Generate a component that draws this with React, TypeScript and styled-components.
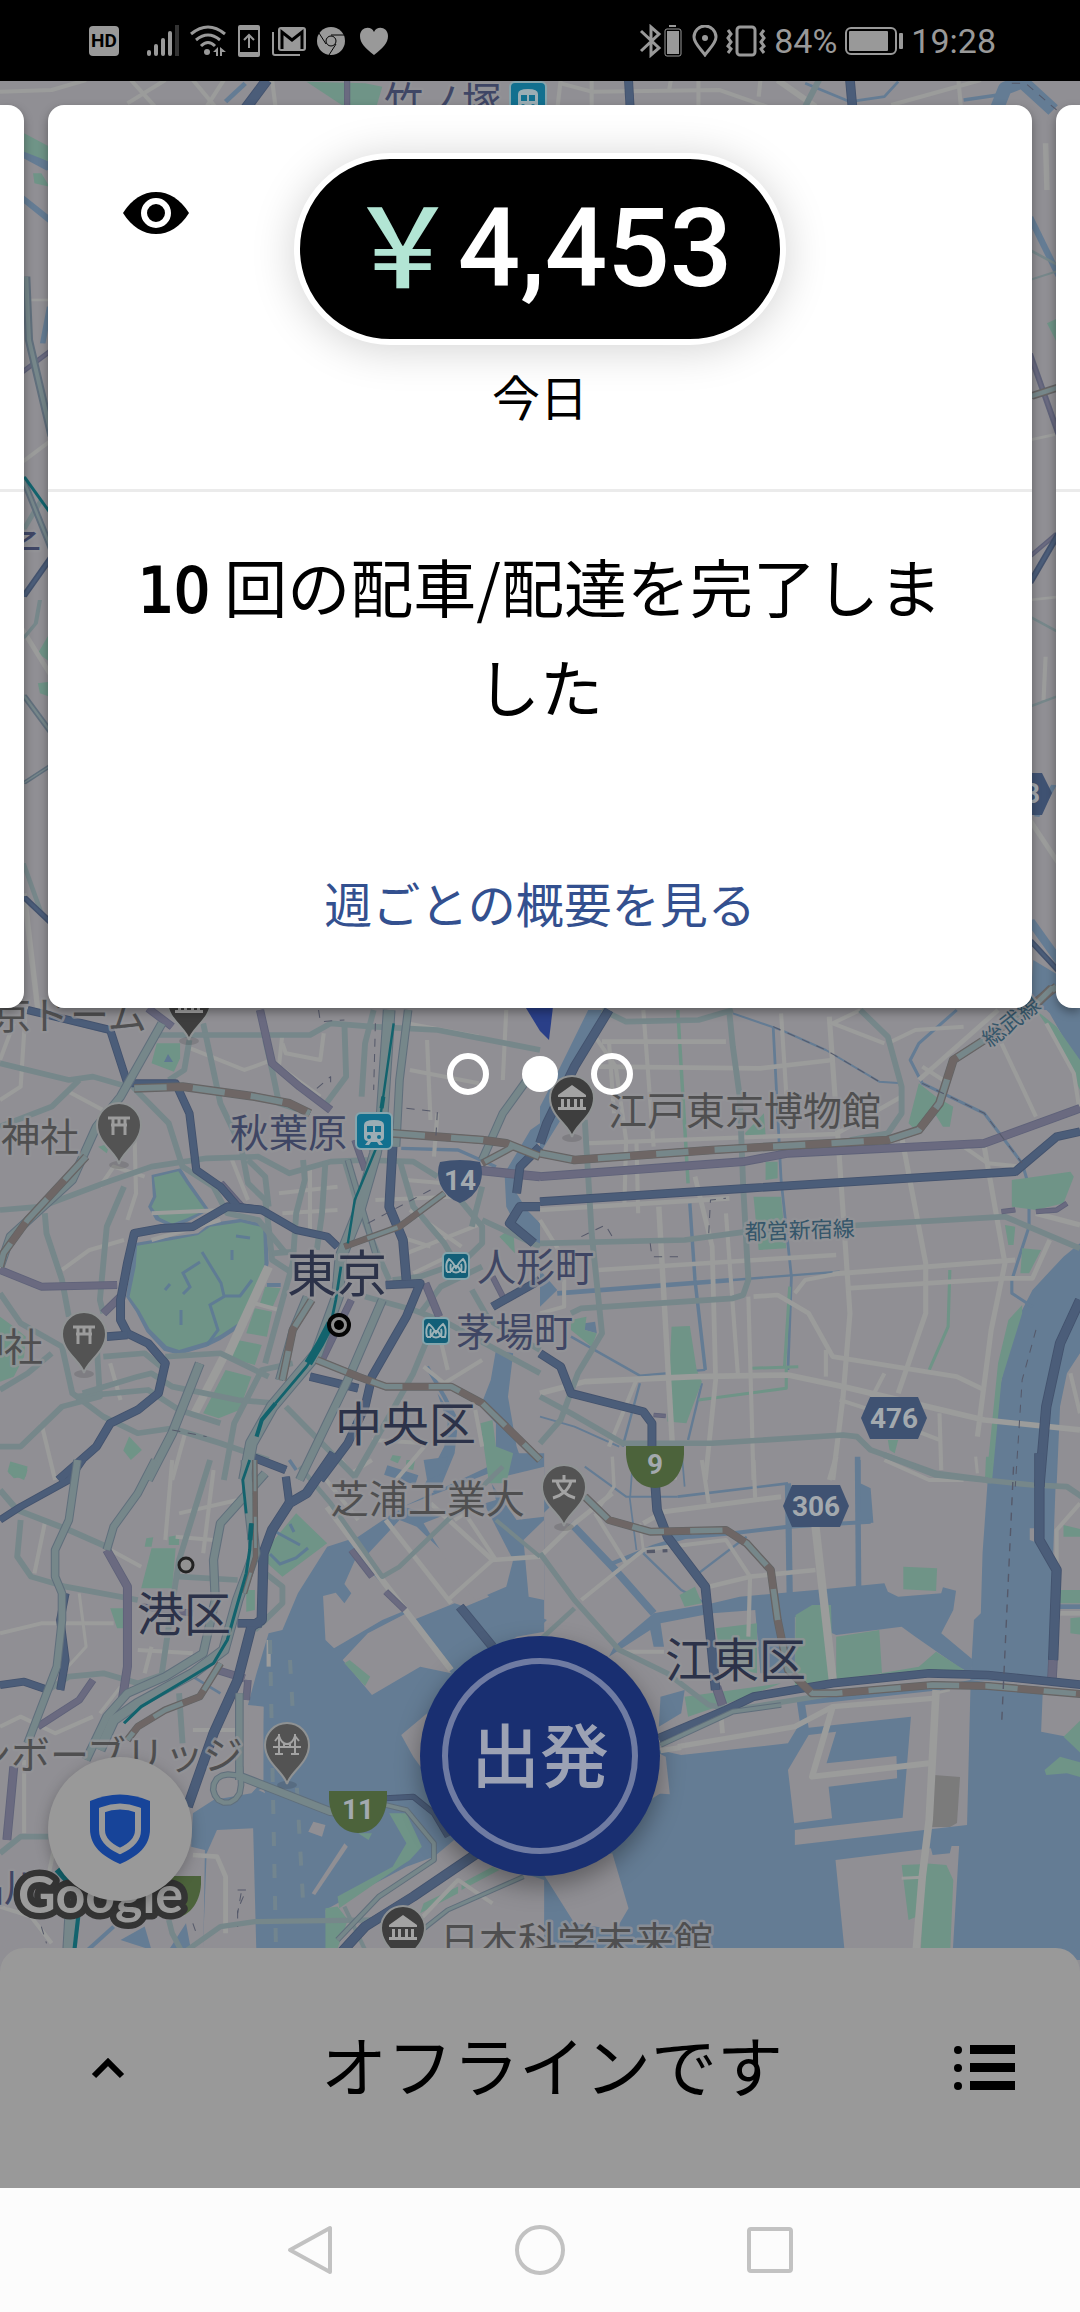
import React from 'react';
import styled, { createGlobalStyle } from 'styled-components';

const jp = `'Noto Sans CJK JP', 'Noto Sans', sans-serif`;

const GlobalStyle = createGlobalStyle`
  *, *::before, *::after { box-sizing: border-box; }
  body { margin: 0; background: #000; font-family: ${jp}; color: #000; }
  button { margin: 0; padding: 0; border: 0; background: none; font: inherit; color: inherit; cursor: pointer; }
  svg { display: block; }
`;

/* ---------- map data ---------- */

type Line = [string, number?];
interface Tile {
  at: string;
  water?: string[];
  canals?: Line[];
  land?: string[];
  parks?: string[];
  greens?: Line[];
  minor?: Line[];
  street?: Line[];
  purple?: Line[];
  blue?: Line[];
  trunk?: Line[];
  rail?: Line[];
  teal?: Line[];
  dashes?: Line[];
}

const quad = (x: number, y: number) => `translate(${x} ${y}) scale(0.3444 0.3333)`;
const wide = (y: number) => `translate(0 ${y}) scale(0.6888 0.3333)`;

const tiles: Tile[] = [
  {
    at: quad(0, 0),
    parks: ['890,245 1060,250 1110,260 1090,330 1000,320'],
    canals: [['655,305 712,250', 14]],
    minor: [['0,275 150,270 250,240'], ['370,310 480,240'], ['380,240 450,320'], ['560,240 625,320'], ['600,320 650,240'], ['790,240 800,320']],
    purple: [['1008,240 1008,330', 16]],
    blue: [['710,330 775,240', 30]],
  },
  {
    at: quad(540, 0),
    canals: [['770,250 900,305 1000,290 1040,245', 8], ['1230,300 1330,285', 10], ['1325,330 1350,265 1400,245 1490,330', 40]],
    minor: [['60,240 50,330'], ['60,250 150,275 520,270 660,320'], ['150,240 150,330'], ['380,240 375,270'], ['460,240 460,330'], ['640,240 635,290'], ['690,240 800,320', 18], ['1020,315 1280,240'], ['1215,240 1222,320']],
    street: [['810,240 765,330', 18]],
    blue: [['257,240 262,330', 24], ['900,240 908,330', 26]],
    dashes: [['1370,250 1410,250 1500,330', 3]],
  },
  {
    at: wide(90),
    parks: ['35,130 72,170 72,215 35,185', '48,250 60,250 72,290 50,280', '1520,700 1540,680 1540,780'],
    canals: [['30,185 75,235', 20], ['30,320 75,395', 12], ['1495,380 1540,570', 10], ['62,760 72,650', 8]],
    minor: [['30,630 75,630', 8], ['1518,160 1520,300', 8], ['30,1120 75,1050', 8], ['1495,1050 1540,1030', 8]],
    street: [['1495,480 1540,530', 6], ['1495,570 1540,540', 5]],
    purple: [['30,850 75,780', 8], ['1495,790 1538,1040', 7], ['1495,1400 1535,1330', 7]],
    trunk: [['38,560 42,750 75,1040', 9], ['34,1170 75,1380', 7]],
    rail: [['1495,920 1540,890', 18]],
    teal: [['35,1160 75,1275', 5]],
  },
  {
    at: wide(500),
    water: ['1500,1380 1540,1430 1540,1530 1495,1530'],
    parks: ['72,400 55,460 72,485', '55,550 72,545 72,590 58,580'],
    canals: [['1505,950 1530,855', 8], ['1495,1260 1540,1390', 14]],
    minor: [['30,380 75,530', 8], ['35,1180 55,1530', 8], ['1495,300 1540,290', 8], ['1495,960 1540,1100', 8], ['1518,470 1515,600', 6]],
    street: [['34,415 52,370 58,300', 6], ['34,90 60,0', 8], ['1495,350 1540,400', 6], ['1495,620 1540,585', 6], ['34,1090 60,1240', 7]],
    blue: [['34,290 75,170', 8], ['34,1190 75,1270', 9], ['1495,250 1540,90', 8], ['1495,1320 1540,1420', 8]],
    trunk: [['34,585 75,700', 7], ['34,850 75,795', 6]],
    rail: [['1495,1530 1530,1460', 16]],
  },
  {
    at: quad(0, 980),
    water: [
      '1568,430 1540,450 1500,520 1465,580 1470,680 1500,740 1568,800 1568,730 1530,690 1500,640 1510,560 1568,480',
      '1440,1110 1490,1120 1475,1250 1500,1400 1540,1520 1440,1520 1440,1330 1395,1280 1425,1200',
      '1270,1240 1330,1330 1320,1420 1280,1520 1230,1520 1290,1400 1300,1330',
      '366,950 380,860 388,790 500,770 575,760 610,730 700,716 775,735 780,850 768,910 735,990 700,1040 640,1080 600,1100 520,1124 476,1112 425,1055 395,995',
      '440,585 525,565 550,605 608,690 545,725 500,742 452,720 430,680 444,650',
    ],
    canals: [['1165,505 1330,510 1440,560', 10], ['1240,1160 1290,1250 1330,1330', 12], ['70,90 320,155', 14], ['1120,1470 1210,1500', 30], ['775,915 815,915', 12]],
    parks: [
      '398,797 500,780 575,765 590,800 575,765 610,740 700,727 764,742 768,850 756,910 724,985 694,1028 640,1065 600,1085 520,1110 484,1098 434,1046 404,990 376,950 386,900 394,860',
      '447,592 518,574 542,612 596,690 540,716 500,731 464,713 440,680 454,650',
      '455,190 523,190 523,235 505,275 440,250',
      '770,920 815,925 790,985 755,970', '740,985 790,995 775,1070 715,1060',
      '690,1080 760,1095 740,1155 655,1130', '655,1170 730,1190 695,1290 635,1315 590,1300',
      '0,1010 40,1040 75,1070 70,1130 40,1190 0,1205',
      '375,1370 412,1410 380,1440 358,1412', '30,1445 80,1460 75,1490 40,1495 22,1475',
      '1450,770 1490,740 1495,820', '1395,1330 1430,1320 1440,1400 1490,1420 1470,1510 1420,1510',
      '1180,1440 1205,1440 1200,1470 1178,1465', '1140,1425 1165,1430 1155,1450 1133,1440', '285,500 320,490 310,520',
    ],
    minor: [
      ['0,360 60,320 75,80'], ['820,190 830,220 930,240 940,160'], ['540,200 710,270 790,240'], ['190,330 390,440 395,640 370,720'],
      ['180,870 260,810 360,780'], ['1180,130 1390,170'], ['1090,660 1310,650'], ['1180,820 1400,730'], ['1180,600 1290,610'],
      ['780,860 660,1130', 26], ['650,1130 560,1310', 24], ['740,970 810,990'], ['320,1150 350,1260'], ['540,1350 500,1500'],
      ['440,700 650,690'], ['1230,1160 1290,1210 1400,1140'], ['1160,770 1250,800'], ['1080,1380 1240,1390 1150,1500'],
      ['1470,90 1460,300'], ['0,240 40,130'], ['290,620 330,560 420,590'], ['640,720 440,780'], ['820,160 810,260 930,350'],
      ['900,560 900,760'], ['1240,180 1250,420'], ['1190,270 1390,310'], ['1190,690 1340,800'], ['1270,1040 1300,1170'],
      ['1200,880 1320,820'], ['820,700 980,690'], ['810,640 980,620'], ['120,1330 160,1500'], ['1380,1290 1400,1400'], ['670,530 720,660'], ['1270,400 1260,530'],
    ],
    street: [
      ['0,250 200,300 270,290 370,320'], ['0,440 150,380 230,300'],
      ['0,690 120,680 300,610 440,560 600,535 750,530 840,580 960,545 1060,540 1200,545 1270,590'],
      ['590,130 640,370 700,500 720,610 770,660 780,740 790,840 850,880'],
      ['385,320 490,430 530,560 620,620 660,700 750,720 830,820'],
      ['360,620 310,740 290,960 300,1000'], ['130,700 135,760 180,900 200,1010'],
      ['440,165 600,165 900,165 960,130 1080,140 1270,150 1568,210'], ['770,180 790,270 810,370 900,400'],
      ['1000,130 1005,290 940,380'], ['1085,90 1060,190 1050,350'], ['550,180 535,270 490,300'],
      ['880,540 885,600 860,700 850,850 770,1150'], ['945,545 935,700 920,810'], ['720,540 770,590 780,680'],
      ['1000,540 1040,680 1100,830 1130,900'], ['1160,540 1200,680 1290,790 1330,860'], ['1320,640 1400,740 1400,790 1340,850'],
      ['1370,740 1400,620'], ['1400,720 1568,800'], ['0,1230 80,1180 150,1120'],
      ['0,940 60,1030 180,1100 210,1240 300,1310 400,1360 500,1345 640,1390 780,1440'], ['220,1250 430,1230 520,1290 640,1330'],
      ['0,1400 60,1400 180,1280 290,1250 280,1080'], ['240,1240 400,1190 440,1180 500,1220 690,1260 800,1270'],
      ['300,1130 420,1120 480,1170'], ['650,1500 680,1330 760,1170 850,1150'], ['480,1130 640,1120 780,1190'],
      ['1240,1080 1200,1180 1080,1400 1030,1490 830,1280'], ['1060,950 1200,990 1300,1030 1568,1180'],
      ['1220,1000 1280,920 1400,860'], ['1140,900 1220,890 1330,850'], ['1370,930 1420,1020 1568,1110'], ['790,820 860,815'],
    ],
    purple: [['0,870 120,920 340,915'], ['640,610 700,680'], ['755,90 790,250 870,320 960,390'], ['300,1000 350,950'], ['1235,910 1275,1010'], ['1380,570 1568,590', 26], ['430,85 500,140'], ['1020,960 930,1150', 20], ['1430,890 1470,970', 16], ['1030,480 1060,570', 18]],
    blue: [
      ['80,90 320,150 370,310 510,310 550,400 570,570 640,620 690,680 760,690 860,750 950,770 980,800', 22],
      ['760,690 660,680 560,740 470,745 390,760 370,850 350,960 350,1020 370,1060 430,1090 480,1150 460,1240 400,1290 320,1330 280,1400 170,1500', 24],
      ['310,1070 370,1065'], ['1140,500 1130,680 1170,780 1180,900', 26],
      ['1120,915 1220,910 1180,1010 1080,1190 1060,1280 1010,1390 930,1500', 24], ['900,1190 1040,1225'], ['730,1430 830,1470'],
      ['1568,680 1510,680 1480,730 1550,790', 26], ['1430,980 1568,900', 24], ['1500,640 1510,560 1568,500', 24],
    ],
    trunk: [
      ['470,130 350,350 280,440 210,600 30,770 0,860', 24], ['580,1150 500,1360 430,1500', 26],
      ['1130,90 1110,400 1090,520 1040,700 990,830 980,950 920,1120 790,1280 730,1390 710,1500', 34],
      ['1185,90 1160,300 1150,500', 22], ['1110,960 1010,1200 870,1500', 24], ['1400,540 1460,400 1530,300', 22], ['890,950 850,1050 810,1200', 20], ['1010,540 1090,820', 16],
    ],
    rail: [
      ['390,325 530,320 740,350 840,370 900,400'], ['1140,460 1400,480 1470,490 1568,530'], ['1290,640 1160,740 1000,800', 18],
      ['905,960 850,1050 820,1200', 22], ['920,1140 1040,1190 1120,1220 1310,1220 1400,1270 1568,1440', 22],
      ['250,530 80,720 10,820 0,860', 22], ['1490,500 1400,550', 20],
    ],
    teal: [['1143,130 1110,370 1090,510 1030,660 1010,790', 7], ['1113,350 1108,385', 12], ['990,860 975,960 965,1010 930,1100 890,1160 800,1270', 8], ['960,1030 930,1090 895,1150', 24], ['800,1270 760,1320 745,1370', 12]],
    dashes: [['1180,385 1270,395 1265,480', 3], ['500,1350 600,1370', 3], ['920,325 960,290 960,310', 3], ['1250,630 1050,740', 3], ['925,90 930,125 1000,120', 3], ['1090,130 1085,330', 3]],
  },
  {
    at: quad(540, 980),
    water: [
      '1568,790 1520,830 1430,930 1370,1050 1330,1250 1310,1520 1500,1520 1510,1280 1530,1180 1568,1120',
      '1430,0 1568,0 1568,260 1480,100 1430,50', '140,90 200,90 110,250 60,420 0,520 0,380 40,300', '0,870 50,930 0,980',
      '130,1030 160,1025 165,1060 130,1050',
    ],
    canals: [
      ['50,940 560,900', 14], ['560,900 870,875', 7], ['677,140 700,600 730,890 720,1170', 8], ['435,670 450,900 480,1170', 10],
      ['480,1170 290,1187 90,1070', 7], ['290,1210 240,1400', 7], ['470,1210 430,1380', 7], ['560,100 700,150 830,210 985,305 1050,310', 6],
      ['1210,90 1100,190 1075,240 1110,310 1290,400 1400,550 1420,620 1420,740 1370,900 1370,940 1430,980', 9],
      ['925,1440 925,1520', 12], ['0,1310 100,1340 230,1400', 5], ['410,1400 420,1520', 5],
    ],
    parks: [
      '1100,310 1150,350 1200,380 1190,440 1170,440 1140,390 1090,450 1070,430', '595,460 650,400 655,465 600,470',
      '655,545 690,545 690,595 655,600', '620,650 700,650 715,805 635,810', '1370,600 1540,575 1550,590 1520,670 1440,690 1370,680',
      '1350,735 1380,740 1375,795 1360,795', '1400,805 1455,810 1420,880 1395,880', '90,1020 135,1010 130,1050 165,1060 150,1100 90,1050',
      '382,1040 435,1038 455,1170 470,1205 425,1330 370,1325', '1440,90 1500,140 1568,240 1568,330 1500,180',
      '1400,975 1360,1020 1330,1150 1295,1510 1312,1510 1340,1200 1400,1000', '1010,1380 1040,1380 1030,1420 1015,1410',
    ],
    greens: [['400,90 430,610', 10], ['1190,870 1185,1040 1130,1170', 9], ['725,920 710,1160', 9], ['615,1165 750,1160', 9], ['460,1260 715,1225 715,1160', 9]],
    minor: [
      ['160,170 220,260 250,480 245,680'], ['200,180 215,400'], ['300,90 330,500'], ['280,480 285,700'], ['345,680 390,1500', 16], ['450,590 500,800 510,1200 480,1500', 14],
      ['540,700 575,1190'], ['840,110 865,470 900,1000 880,1250 850,1500', 15], ['1050,470 1120,850 1120,1000 1040,1240', 15],
      ['1290,500 1350,850 1310,1050 1270,1370', 15], ['180,185 540,185', 14], ['170,260 640,265 850,240', 14], ['130,490 860,462 1050,350', 13], ['0,690 550,655', 14],
      ['170,870 860,825', 14], ['850,882 1380,840', 15], ['890,925 1350,895 1430,895 1480,780', 14],
      ['0,1240 130,1205 450,1190 720,1185 880,1220 1290,1320 1568,1350', 17], ['870,1260 960,1290'], ['1160,1300 1165,1470'],
      ['620,950 690,945 780,1000 850,1130 1210,1190 1290,1230', 14], ['740,940 770,900 870,880'], ['830,1110 830,1190'],
      ['930,90 850,130 1000,190'], ['1010,190 1090,150 1230,140'], ['1330,90 1100,300', 14], ['1110,260 1170,300'], ['1340,190 1440,410'], ['1230,500 1300,550 1400,560'],
      ['1440,700 1568,735', 16], ['200,1400 280,1200'], ['605,950 620,1500'], ['700,100 720,420'], ['1000,1180 960,1260'], ['1060,1340 1160,1380'], ['1540,1180 1568,1300'], ['0,720 60,820'], ['0,1000 70,980 70,870'],
      ['1470,130 1550,280 1568,400'],
    ],
    street: [
      ['180,90 250,125 460,120 560,90'], ['550,100 560,200 580,350 590,620 605,900 590,945 560,955 120,985 90,1000'],
      ['930,90 1010,170 1050,320 1050,400 1010,460 900,480'], ['130,420 150,760 180,1060 110,1180 60,1320 0,1390'],
      ['0,790 420,780 600,755 1350,710 1568,805'], ['0,1250 90,1300 240,1390 500,1390 880,1365 920,1370 960,1410 1150,1480 1300,1500'],
    ],
    purple: [['0,590 590,545 720,520 1290,490 1568,385', 24], ['1340,695 1380,690', 14], ['1440,695 1500,690 1530,670', 14], ['330,1305 365,1308', 12]],
    blue: [['200,90 100,260 20,430 0,490', 26], ['0,665 600,625 1380,575 1500,470 1568,455', 24], ['0,1120 60,1160 90,1240 300,1295 325,1330 325,1400', 24], ['1568,960 1510,1090 1470,1280 1450,1520', 28]],
    rail: [['0,520 100,540 500,510 1010,480 1100,450 1160,370 1200,240 1290,180 1500,20', 24]],
    dashes: [['1440,1050 1400,1200 1380,1520', 3], ['490,760 495,660 540,655', 3], ['120,770 190,735 210,770', 3], ['320,790 325,830 420,830', 3], ['677,140 830,210 985,305', 3], ['1110,310 1290,400 1400,550', 3]],
  },
  {
    at: quad(0, 1460),
    water: [
      '950,260 865,400 820,510 780,520 745,640 720,735 765,740 760,960 730,1000 620,1020 560,1060 555,1160 595,1170 590,1500 1580,1500 1580,-20 1500,-20 1170,140 1040,230',
      '1300,-10 1230,0 1240,60 1290,40', '490,1470 540,1390 560,1500', '350,1440 420,1400 440,1470',
    ],
    canals: [['1440,-10 1350,150 1260,90', 10], ['840,0 860,30', 10], ['560,650 640,700', 8], ['255,1470 330,1400', 12]],
    land: [
      '938,408 975,398 1000,430 1020,400 1000,372 1035,290 1180,450 1110,480 970,565 945,540',
      '1068,520 1180,460 1310,640 1220,620 1080,705 995,600', '1070,280 1160,180 1210,200 1420,410 1350,440 1320,430 1200,480 1120,370',
      '1230,190 1400,120 1490,300 1470,380 1380,420 1320,340', '1420,60 1580,20 1580,170 1500,180', '1520,240 1580,180 1580,420 1535,410', '1170,140 1420,40 1440,120 1280,170',
      '1500,530 1580,515 1580,600 1400,600', '1165,825 1240,760 1235,940 1200,890', '630,1110 735,1105 745,1500 588,1500 600,1180',
      '1000,1150 1010,1160 915,1305 905,1300', '910,1085 945,1095 935,1130 895,1115',
      '980,1330 1180,1220 1260,1190 1330,1130 1400,1200 1580,1260 1580,1500 950,1500 945,1350', '765,740 765,960 730,1000 720,740', '750,990 765,985 770,1000',
    ],
    parks: [
      '860,160 950,250 820,350 755,290', '440,265 510,265 500,385 410,385', '490,230 520,225 520,255 490,255', '320,445 360,445 360,505 340,505',
      '30,15 80,30 70,60 25,40', '715,390 740,390 740,450 715,455', '1015,600 1075,650 1060,678 1000,610', '425,235 445,232 440,260 420,260',
      '1130,1060 1180,1060 1225,1160 1190,1200 1160,1220 985,1345 980,1310 1140,1220 1180,1150', '945,1345 980,1340 1010,1380 975,1480 945,1480',
      '1230,1330 1330,1280 1330,1300 1220,1360', '1340,1270 1430,1220 1450,1230 1340,1290', '1040,1120 1080,1120 1070,1140',
    ],
    minor: [
      ['0,520 120,490 330,490'], ['500,0 480,240'], ['130,190 100,340'], ['250,230 410,320'], ['400,570 560,580'], ['0,800 60,770 160,820 270,770'],
      ['70,1120 70,900'], ['0,1340 90,1370 150,1450'], ['560,1185 630,1190 655,1250 655,1420', 14], ['560,810 700,810'], ['950,140 1080,320 1310,630', 18],
      ['1120,180 1310,430', 14], ['1250,130 1430,300 1568,290', 14], ['1320,180 1350,160 1440,300', 12], ['940,50 1040,180'], ['510,230 620,240'], ['520,160 690,120'], ['620,30 590,280'],
      ['290,760 350,680', 10], ['440,560 420,640'], ['780,540 780,620'], ['1200,1400 1330,1260 1430,1330', 12], ['1430,300 1300,420'], ['230,400 250,560 180,640', 9],
      ['160,1150 130,1300'], ['990,0 1020,40 1080,0'],
    ],
    street: [
      ['0,90 50,150 200,210 310,260', 18], ['60,180 50,290 90,350 190,380 400,420'], ['610,0 520,300 490,500 470,640'], ['520,350 690,360'],
      ['770,340 820,380 820,430 740,510'], ['140,690 200,650 300,640 400,670 540,620'], ['520,700 530,850'],
      ['870,20 960,130 1110,350 1160,320 1300,180 1460,20', 14], ['1440,180 1568,290', 12], ['490,1380 500,1420 530,1480 640,1400 740,1385 1100,1380', 16],
      ['0,1180 60,1130 140,1130'], ['1000,1340 1060,1470', 12],
    ],
    purple: [['310,270 370,380 370,620 355,720', 24], ['270,660 230,720 110,800', 20], ['40,920 20,1140', 24], ['1020,270 1080,350', 18], ['1120,395 1175,450', 18], ['720,660 715,720', 20], ['630,630 710,655', 22], ['410,440 560,460', 18]],
    blue: [
      ['0,180 60,140 200,60 240,0', 20], ['190,400 175,480 190,600 175,690', 22], ['0,675 70,665 140,690', 22],
      ['970,-20 890,100 840,130 790,210 765,280 760,480 730,500 690,660 620,820 545,1040', 28], ['830,50 840,130', 22], ['690,490 760,490', 24],
      ['1335,440 1430,560', 26], ['1120,1015 1200,1010 1260,1060 1300,1130', 16], ['1400,1170 1200,1310 1060,1400 980,1490', 28],
    ],
    trunk: [
      ['225,0 200,180 160,270 160,350 180,400 180,480 165,620 80,850', 22], ['450,0 400,100 330,200 310,270', 22],
      ['770,40 640,190 620,300 625,420 590,580 480,650 370,700 310,770 250,900', 24],
      ['715,0 720,100 740,280 690,420 650,570 560,640 400,730 330,780 290,870', 30], ['695,700 695,960', 22],
      ['700,950 960,1055 1000,1060', 24], ['697,920 699,950 700,975 696,1000 684,1017 668,1027 650,1028 634,1020 624,1006 619,990 621,972 630,956 644,947 662,943 700,948', 16],
      ['1120,1035 1180,1050 1260,1150 1260,1200 1100,1310 980,1440', 14], ['210,1300 200,1480', 36], ['1520,1250 1300,1350 1140,1480', 12],
    ],
    rail: [['740,0 742,290 710,400', 14], ['640,610 580,710 480,750 400,800 370,840', 20]],
    teal: [['725,0 705,60 715,160', 8], ['730,190 725,270 715,340 690,430 660,540 620,610 540,660 410,740 360,790', 9], ['730,190 726,240', 14], ['235,1300 215,1480', 12], ['170,1225 210,1270', 30]],
    dashes: [['690,1290 715,1290 690,1350 690,1400', 3], ['700,1300 690,1360', 3], ['560,1390 570,1420', 3], ['120,1400 135,1450', 3]],
  },
  {
    at: quad(540, 1460),
    water: [
      '345,870 410,885 720,850 755,790 745,720 1145,680 1250,660 1460,690 1455,815 1530,830 1580,870 1580,1500 -10,1500 -10,1240 350,1000',
      '1310,-10 1500,-10 1490,280 1480,670 1250,660 1260,480 1280,460 1285,280 1300,60',
      '500,430 580,410 800,390 1000,370 1010,395 1040,410 1165,400 1170,382 1208,392 1200,450 1165,520 1258,600 1250,640 1215,620 1090,530 1050,500 860,525 740,470 740,640 640,640 625,450 500,460 350,490 360,560 330,560 320,510 200,590 215,560 330,460',
      '350,710 420,690 410,760 345,800', '930,70 960,85 968,188 920,190', '0,100 40,130 0,170', '0,470 20,480 0,500',
    ],
    canals: [
      ['720,70 725,400', 18], ['922,-10 925,380', 16], ['960,185 720,200 560,220 440,230 370,230', 12], ['400,110 720,70', 8],
      ['90,190 210,320 330,460', 22], ['210,310 330,260 440,225', 12], ['300,280 410,390 480,430', 7], ['460,340 600,230', 7], ['260,110 280,270', 5],
      ['130,20 250,110 400,110', 6], ['1510,440 1580,440', 14], ['270,-10 262,110', 5],
    ],
    land: [
      '770,735 1250,680 1240,1095 740,1155 740,1110 1053,1073 1077,770 780,803', '780,825 860,815 832,910 1035,888 1037,955 838,980 848,1075 738,1090 720,930',
      '858,1200 1135,1165 1140,1185 1190,1180 1195,1158 1217,1158 1197,1500 887,1500', '0,1230 210,1180 257,1345 220,1410 160,1400 100,1390 15,1250', '330,1000 377,1003 365,890 345,880',
      '1422,205 1435,205 1435,245 1422,240',
    ],
    parks: [
      '1055,320 1153,325 1150,393 1055,388', '742,465 790,435 845,435 850,660 740,680', '860,530 985,510 993,640 860,660', '510,505 630,490 630,640 530,620',
      '405,405 450,380 470,430 420,440', '990,640 1100,620 1150,575 1240,635 1000,655', '420,710 700,670 600,710 430,770', '1520,195 1580,210 1580,230 1520,230',
      '1510,390 1580,390 1580,430 1510,430', '1540,475 1580,470 1580,525 1540,520', '1050,1215 1105,1213 1095,1370 1070,1380', '1115,1210 1180,1215 1200,1260 1190,1500 1105,1500',
      '1465,930 1510,890 1580,910 1580,955 1530,940 1470,945', '1580,770 1520,830 1580,890', '1295,-10 1312,-10 1305,60 1292,60',
    ],
    minor: [
      ['470,0 490,130'], ['620,0 625,120'], ['860,-10 840,60', 14], ['300,190 360,155 700,110', 15], ['0,290 100,190 210,100', 14], ['160,160 250,310'],
      ['120,420 300,270 540,240 610,350 605,530', 12], ['490,380 610,350 800,330', 14], ['800,200 850,660', 24], ['240,575 360,575'], ['530,820 525,760', 14],
      ['400,860 740,800 850,740 1140,715', 16], ['850,740 790,950 1130,910', 18], ['1150,690 1130,1080 1110,1250 1090,1500', 22], ['1000,0 1130,60 1230,60'],
      ['1500,400 1500,210 1568,130', 12], ['1510,460 1580,460', 14], ['350,872 410,862', 16], ['300,270 290,190', 8], ['1165,-10 1165,30', 9], ['1265,-10 1270,40', 9], ['1050,1255 1110,1252', 9],
      ['210,-10 215,80 160,160', 10], ['1190,690 1150,700', 8],
    ],
    street: [['0,280 100,420 230,570 370,640 490,735 560,750 860,700', 16], ['0,540 100,445', 14], ['1000,-15 1150,45 1430,75 1530,80 1580,115', 17]],
    purple: [['512,680 530,735', 26], ['1490,590 1486,665', 26]],
    blue: [
      ['335,80 340,150 370,230 480,380 495,530 510,690', 26], ['1450,-20 1450,240 1500,330 1490,600', 28],
      ['345,835 540,750 620,710 850,670 1130,640 1300,645 1580,675', 24],
    ],
    trunk: [['350,855 560,755 700,735', 14]],
    rail: [['130,110 200,180 320,215 540,210 600,250 670,330 690,480 720,630 790,700 860,700 1140,675 1300,678 1580,703', 22]],
    dashes: [['1375,20 1340,800', 4], ['310,275 370,272', 10]],
  },
];

const C = {
  land: '#908f94', water: '#647c94', park: '#6f9487', minor: '#9b9c9b', street: '#76878a', streetEdge: '#606f7c',
  blue: '#4b5d79', blueEdge: '#43526d', purple: '#6a6a80', rail: '#6e6665', teal: '#12636d',
};

const layer = (key: keyof Tile, color: string, width: number, extra = 0, dash?: string) => (
  <g key={`${key}${color}`}>
    {tiles.map(t => (
      <g key={t.at} transform={t.at} fill="none" stroke={color} strokeLinejoin="round" strokeDasharray={dash}>
        {((t[key] as Line[]) || []).map(([p, w]) => <polyline key={p} points={p} strokeWidth={(w || width) + extra} />)}
      </g>
    ))}
  </g>
);

const fills = (key: 'water' | 'land' | 'parks', color: string) => (
  <g fill={color}>
    {tiles.map(t => <g key={t.at} transform={t.at}>{(t[key] || []).map(p => <polygon key={p} points={p} />)}</g>)}
  </g>
);

/* ---------- map labels and symbols ---------- */

const Label = styled.text<{ $size?: number; $tone?: string; $halo?: string }>`
  font-family: ${jp};
  font-size: ${p => p.$size || 39}px;
  fill: ${p => p.$tone || '#4f4f50'};
  stroke: ${p => p.$halo || '#939397'};
  stroke-width: 5px;
  stroke-opacity: 0.75;
  stroke-linejoin: round;
  paint-order: stroke;
`;

const RouteNumber = styled.text`
  font-family: Roboto, 'Liberation Sans', sans-serif;
  font-size: 28px;
  font-weight: 700;
  fill: #a3a9ae;
  text-anchor: middle;
`;

const Wordmark = styled.text`
  font-family: Lato, 'Liberation Sans', sans-serif;
  font-size: 52px;
  font-weight: 700;
  fill: #9b9b9b;
  stroke: #343434;
  stroke-width: 13px;
  stroke-linejoin: round;
  paint-order: stroke;
`;

type Glyph = 'torii' | 'museum' | 'school' | 'bridge';
const Pin = ({ x, y, kind, tone = '#535353' }: { x: number; y: number; kind: Glyph; tone?: string }) => (
  <g transform={`translate(${x} ${y})`}>
    <ellipse cy="40" rx="10" ry="4" fill="#000" opacity="0.12" />
    <path d="M0 39C-3 27-22 18-22 0A22 22 0 1 1 22 0C22 18 3 27 0 39Z" fill={tone} stroke="#8f9293" strokeWidth="2" />
    {kind === 'torii' && <path d="M-11-7H11M-8 0H8M-6-6V10M6-6V10M0-6V0" stroke="#9c9c9c" strokeWidth="3" fill="none" />}
    {kind === 'museum' && <path d="M-14-3L0-13L14-3V-1H-14ZM-11 1H-8V9H-11ZM-5 1H-2V9H-5ZM2 1H5V9H2ZM8 1H11V9H8ZM-14 9H14V12H-14Z" fill="#a3a3a3" />}
    {kind === 'school' && <path d="M0-12V-7M-12-6H12M-7-6C-5 3 3 9 11 11M7-6C5 3-3 9-11 11" stroke="#a3a3a3" strokeWidth="3" fill="none" />}
    {kind === 'bridge' && <path d="M-14 2H14M-8-11V10M8-11V10M-12 9H-4M4 9H12M-8-9C-6-3-3-1 0-1S6-3 8-9M-3-1V2M3-1V2M-12-4L-8-9M12-4L8-9" stroke="#a3a3a3" strokeWidth="2" fill="none" />}
  </g>
);

const Station = ({ x, y }: { x: number; y: number }) => (
  <g transform={`translate(${x} ${y})`}>
    <rect x="-1" y="-1" width="36" height="36" rx="5" fill="#12708f" stroke="#86a5ad" strokeWidth="2" />
    <path d="M7 11Q7 6 17 6T27 11V23Q27 27 23 27L26 31H22L20 28H14L12 31H8L11 27Q7 27 7 23Z" fill="#9badb4" />
    <path d="M10 12H16V18H10ZM18 12H24V18H18Z" fill="#12708f" />
    <circle cx="12" cy="23" r="2" fill="#12708f" /><circle cx="22" cy="23" r="2" fill="#12708f" />
  </g>
);

const Metro = ({ x, y }: { x: number; y: number }) => (
  <g transform={`translate(${x} ${y})`}>
    <rect x="-13" y="-13" width="26" height="26" rx="4" fill="#125f78" stroke="#84a5ac" strokeWidth="2" />
    <path d="M-9 6Q-11-3-7-7Q-4-5 0 2Q4-5 7-7Q11-3 9 6H5M-9 6H-5M-5 6Q-6 0-5-2M5 6Q6 0 5-2M-4 5Q0 8 4 5Q3 0 0 0T-4 5" fill="none" stroke="#9db3b8" strokeWidth="2" />
  </g>
);

const Hex = ({ x, y, n }: { x: number; y: number; n: string }) => (
  <g transform={`translate(${x} ${y})`}>
    <path d="M-33 0L-24-21H24L33 0L24 21H-24Z" fill="#3f5272" />
    <RouteNumber y="10">{n}</RouteNumber>
  </g>
);

const Expressway = ({ x, y, n }: { x: number; y: number; n: string }) => (
  <g transform={`translate(${x} ${y})`}>
    <path d="M-29 0H29V8C28 28 16 42 0 42S-28 28-29 8Z" fill="#4c633b" />
    <RouteNumber y="28">{n}</RouteNumber>
  </g>
);

const MapCanvas = styled.svg`
  position: absolute;
  inset: 0;
  width: 100%;
  height: 100%;
`;

const CityMap = () => (
  <MapCanvas viewBox="0 81 1080 2107" preserveAspectRatio="xMidYMin slice" role="img" aria-label="東京の地図">
    <rect x="0" y="81" width="1080" height="2107" fill={C.land} />
    {fills('water', C.water)}
    {layer('canals', C.water, 10)}
    {fills('land', C.land)}
    {fills('parks', C.park)}
    {layer('greens', C.park, 9)}
    <polygon points="934,1775 960,1777 957,1823 950,1827 931,1827" fill="#7b7b7b" />
    <g fill="none" stroke="#5f7c94" strokeWidth="3">
      <path d="M202 1252L221 1283L224 1296L240 1296L252 1280M183 1294L190 1287L183 1273L200 1262M207 1345L218 1330L210 1305L225 1296M165 1290L170 1284M181 1310V1325M232 1250V1260M236 1236L250 1238" />
      <path d="M276 1532L300 1545M270 1554L280 1564L296 1558L308 1548M290 1524L294 1532" />
    </g>
    <path d="M164 1062L168 1054L173 1062Z" fill="#5f7793" />
    {layer('minor', C.minor, 12)}
    <g stroke="#72858f" strokeWidth="4" strokeDasharray="14 18" fill="none"><path d="M270 1640L276 1950M290 1660L303 1900" /></g>
    {layer('street', C.street, 17)}
    {layer('purple', '#5f6279', 22, 2)}
    {layer('purple', C.purple, 22, -3)}
    {layer('blue', C.blueEdge, 24, 2)}
    {layer('blue', C.blue, 24, -3)}
    {layer('trunk', C.streetEdge, 22, 3)}
    {layer('trunk', C.street, 22, -3)}
    {layer('rail', '#626465', 24, 2)}
    {layer('rail', C.rail, 24, -2)}
    {layer('rail', C.street, 24, -6, '94 76')}
    {layer('teal', C.teal, 8)}
    {layer('dashes', '#55596a', 3, 0, '24 22')}
    <polygon points="515,990 555,990 549,1040 540,1031" fill="#2a3f88" />

    <Label x="384" y="115" $tone="#3f4665">竹ノ塚</Label><Station x={511} y={83} />
    <Label x="2" y="562" $tone="#3f4665">子</Label>
    <path d="M1024 773H1042L1052 793L1042 815H1024Z" fill="#3f5272" /><RouteNumber x="1024" y="803">38</RouteNumber>
    <Pin x={189} y={1001} kind="museum" tone="#3e3e3e" />
    <Label x="-8" y="1029">京ドーム</Label>
    <Label x="1" y="1151">神社</Label><Pin x={119} y={1125} kind="torii" />
    <Label x="-35" y="1361">神社</Label><Pin x={84} y={1334} kind="torii" />
    <Label x="230" y="1147" $tone="#3f4664">秋葉原</Label><Station x={357} y={1114} />
    <path d="M440 1162Q460 1158 480 1162Q484 1172 480 1184Q474 1198 460 1203Q446 1198 440 1184Q436 1172 440 1162Z" fill="#3f5272" />
    <RouteNumber x="460" y="1190">14</RouteNumber>
    <Label x="287" y="1292" $size={50} $tone="#2c3249">東京</Label>
    <circle cx="339" cy="1325" r="10" fill="#8d8d8d" stroke="#050505" strokeWidth="4" /><circle cx="339" cy="1325" r="5" />
    <Metro x={456} y={1266} /><Label x="477" y="1281" $tone="#3f4664">人形町</Label>
    <Metro x={436} y={1331} /><Label x="456" y="1346" $tone="#3f4664">茅場町</Label>
    <Label x="335" y="1441" $size={47} $tone="#2c3249">中央区</Label>
    <Label x="330" y="1513">芝浦工業大</Label><Pin x={564} y={1487} kind="school" />
    <circle cx="186" cy="1565" r="7" fill="#929292" stroke="#222" strokeWidth="3" />
    <Label x="137" y="1631" $size={47} $tone="#2c3249">港区</Label>
    <Label x="665" y="1677" $size={47} $tone="#2c3249">江東区</Label>
    <Label x="-28" y="1769">ンボーブリッジ</Label><Pin x={287} y={1745} kind="bridge" />
    <Pin x={572} y={1098} kind="museum" tone="#3e3e3e" /><Label x="608" y="1125">江戸東京博物館</Label>
    <Label x="745" y="1240" $size={22} $tone="#35566a" transform="rotate(-2 745 1240)">都営新宿線</Label>
    <Label x="990" y="1048" $size={22} $tone="#35566a" transform="rotate(-38 990 1048)">総武線</Label>
    <Hex x={894} y={1418} n="476" /><Hex x={816} y={1506} n="306" />
    <Expressway x={655} y={1446} n="9" /><Expressway x={358} y={1791} n="11" /><Expressway x={172} y={1876} n="" />
    <Pin x={403} y={1928} kind="museum" tone="#3e3e3e" /><Label x="440" y="1955">日本科学未来館</Label>
    <Label x="-35" y="1901" $tone="#3f4664">品川</Label>
    <Wordmark x="18" y="1913">Google</Wordmark>
  </MapCanvas>
);

/* ---------- status bar ---------- */

const Screen = styled.div`
  display: flex;
  flex-direction: column;
  min-height: 100vh;
`;

const StatusBar = styled.header`
  display: flex;
  justify-content: space-between;
  align-items: center;
  height: 81px;
  padding: 0 84px 0 89px;
  background: #000;
  color: #999;
  font-family: Roboto, 'Liberation Sans', sans-serif;
  font-size: 34px;
  line-height: 40px;
`;

const StatusGroup = styled.div<{ $gap: number }>`
  display: flex;
  align-items: center;
  gap: ${p => p.$gap}px;
`;

const HdBadge = styled.span`
  width: 30px;
  height: 30px;
  margin-right: 17px;
  border-radius: 4px;
  background: #999;
  color: #000;
  font-size: 19px;
  font-weight: 700;
  line-height: 30px;
  text-align: center;
`;

const StatusIcons = () => (
  <StatusBar>
    <StatusGroup $gap={11}>
      <HdBadge>HD</HdBadge>
      <svg width="32" height="32" viewBox="0 0 32 32" fill="#999"><rect y="25" width="4" height="6" rx="2" /><rect x="7" y="19" width="4" height="12" rx="2" /><rect x="14" y="13" width="4" height="18" rx="2" /><rect x="21" y="6" width="4" height="25" rx="2" /><rect x="28" y="0" width="4" height="31" fill="#333" /></svg>
      <svg width="36" height="32" viewBox="0 0 36 32" fill="none" stroke="#999" strokeWidth="3"><path d="M1 9Q18-5 35 9M6 15Q18 5 30 15M11 21Q18 14 25 21" /><circle cx="17" cy="27" r="3" fill="#999" stroke="none" /><path d="M23 27L28 22V31H26V27ZM30 22L36 27H32V31H30Z" fill="#999" stroke="none" /></svg>
      <svg width="24" height="32" viewBox="0 0 24 32"><rect x="2" y="1" width="20" height="30" rx="1" fill="none" stroke="#999" strokeWidth="2" /><path d="M2 1H22V5H2ZM2 27H22V31H2Z" fill="#999" /><path d="M12 23V11M7 15L12 10L17 15" stroke="#999" strokeWidth="2" fill="none" /></svg>
      <svg width="34" height="30" viewBox="0 0 34 30"><path d="M1 6V27Q1 29 3 29H28" fill="none" stroke="#999" strokeWidth="2" /><rect x="6" y="1" width="28" height="24" rx="3" fill="#999" /><path d="M10 23V6L20 14L30 6V23" fill="none" stroke="#000" strokeWidth="3" /></svg>
      <svg width="28" height="28" viewBox="0 0 28 28"><circle cx="14" cy="14" r="14" fill="#999" /><circle cx="14" cy="14" r="5" fill="none" stroke="#000" strokeWidth="1" /><path d="M14 8H27M9 17L2 6M19 17L12 28" stroke="#000" strokeWidth="1" /></svg>
      <svg width="38" height="28" viewBox="0 0 38 28"><path d="M18 28C9 21 4 16 4 9C4 0 15-2 18 5C21-2 32 0 32 9C32 16 27 21 18 28Z" fill="#999" /></svg>
    </StatusGroup>
    <StatusGroup $gap={6}>
      <svg width="43" height="34" viewBox="0 0 43 34" fill="none" stroke="#999" strokeWidth="3"><path d="M2 7L20 24L12 31V3L20 10L2 27" /><rect x="26" y="5" width="16" height="27" rx="2" strokeWidth="1" /><path d="M28 7H40V30H28ZM30 1H37V3H30Z" fill="#999" stroke="none" /></svg>
      <svg width="32" height="32" viewBox="0 0 32 32"><path d="M17 30C12 23 6 18 6 12A11 11 0 0 1 28 12C28 18 22 23 17 30Z" fill="none" stroke="#999" strokeWidth="3" /><circle cx="17" cy="13" r="3" fill="#999" /></svg>
      <svg width="42" height="34" viewBox="2 0 42 34" fill="none" stroke="#999" strokeWidth="3"><rect x="13" y="3" width="18" height="28" rx="3" /><path d="M4 6L7 10L4 14L7 18L4 22L7 25L4 29M40 6L37 10L40 14L37 18L40 22L37 25L40 29" /></svg>
      <span>84%</span>
      <svg width="62" height="30" viewBox="-2 0 62 30"><rect x="1" y="2" width="50" height="26" rx="5" fill="none" stroke="#999" strokeWidth="2" /><rect x="4" y="5" width="39" height="20" rx="1" fill="#999" /><rect x="54" y="7" width="4" height="16" rx="1" fill="#999" /></svg>
      <time>19:28</time>
    </StatusGroup>
  </StatusBar>
);

/* ---------- earnings carousel ---------- */

const Stage = styled.main`
  position: relative;
  display: flex;
  flex: 1;
  flex-direction: column;
  overflow: hidden;
`;

const Layer = styled.div`
  position: relative;
  display: flex;
  flex: 1;
  flex-direction: column;
`;

const Carousel = styled.section`
  display: grid;
  grid-template-columns: 24px minmax(0, 1fr) 24px;
  gap: 24px;
  padding-top: 24px;
`;

const Card = styled.article<{ $radius?: string }>`
  display: flex;
  flex-direction: column;
  background: #fff;
  border-radius: ${p => p.$radius || '16px'};
  box-shadow: 0 4px 10px rgba(0, 0, 0, 0.35);
`;

const CardTop = styled.div`
  display: grid;
  grid-template-columns: 1fr auto 1fr;
  align-items: start;
  height: 387px;
  padding-top: 48px;
  border-bottom: 3px solid #ebebeb;
`;

const EyeButton = styled.button`
  justify-self: start;
  margin: 39px 0 0 75px;
`;

const Earnings = styled.div`
  display: flex;
  flex-direction: column;
  align-items: center;
`;

const Pill = styled.div`
  display: flex;
  align-items: center;
  justify-content: center;
  width: 492px;
  height: 192px;
  border: 6px solid #fff;
  border-radius: 96px;
  background: #000;
  box-shadow: 0 4px 44px rgba(0, 0, 0, 0.18);
  color: #fff;
  font-family: Roboto, 'Liberation Sans', sans-serif;
  font-size: 110px;
  font-weight: 500;
  line-height: 120px;
`;

const Yen = styled.span`
  padding-bottom: 18px;
  color: #b2e5d4;
  font-family: ${jp};
`;

const Period = styled.p`
  margin: 14px 0 0;
  font-size: 48px;
  line-height: 72px;
`;

const CardBody = styled.div`
  display: flex;
  flex: 1;
  flex-direction: column;
  align-items: center;
  justify-content: space-between;
  min-height: 516px;
  padding: 43px 84px 70px;
  text-align: center;
`;

const Summary = styled.p`
  margin: 0;
  font-size: 63px;
  line-height: 100px;
`;

const Count = styled.span`
  font-family: 'DejaVu Sans Condensed', 'DejaVu Sans', sans-serif;
  line-height: 1;
  -webkit-text-stroke: 2px currentColor;
`;

const WeeklyLink = styled.a`
  color: #33508f;
  font-size: 48px;
  line-height: 72px;
  text-decoration: none;
`;

const Dots = styled.nav`
  display: flex;
  justify-content: center;
  gap: 30px;
  margin-top: 45px;
`;

const Dot = styled.button<{ $active?: boolean }>`
  width: 42px;
  height: 42px;
  border: ${p => (p.$active ? '3px solid transparent' : '6px solid #fff')};
  border-radius: 50%;
  background: ${p => (p.$active ? '#fff' : 'transparent')};
  background-clip: padding-box;
`;

/* ---------- floating actions, sheet, navigation ---------- */

const Actions = styled.div`
  display: grid;
  grid-template-columns: 1fr auto 1fr;
  align-items: end;
  margin-top: auto;
  padding: 0 48px 47px;
`;

const RoundButton = styled.button`
  display: grid;
  place-items: center;
  width: 144px;
  height: 144px;
  border-radius: 50%;
  background: #999;
  box-shadow: 0 4px 14px rgba(0, 0, 0, 0.25);
`;

const GoButton = styled(RoundButton)`
  width: 240px;
  height: 240px;
  margin-bottom: 25px;
  background: #192f71;
  box-shadow: 0 10px 24px rgba(0, 0, 0, 0.35);
`;

const GoRing = styled.span`
  display: grid;
  place-items: center;
  width: 196px;
  height: 196px;
  padding-bottom: 8px;
  border: 6px solid #6f7ba2;
  border-radius: 50%;
  color: #9ca2b4;
  font-size: 69px;
  font-weight: 500;
  line-height: 80px;
`;

const Sheet = styled.section`
  display: grid;
  grid-template-columns: 216px 1fr 192px;
  place-items: center;
  height: 240px;
  border-radius: 24px 24px 0 0;
  background: #999;
`;

const SheetTitle = styled.h1`
  margin: 0;
  padding-bottom: 10px;
  font-size: 66px;
  font-weight: 400;
  line-height: 96px;
`;

const NavBar = styled.nav`
  display: flex;
  align-items: center;
  justify-content: center;
  gap: 180px;
  height: 124px;
  background: #fcfcfc;
`;

export default function App() {
  return (
    <Screen>
      <GlobalStyle />
      <StatusIcons />
      <Stage>
        <CityMap />
        <Layer>
          <Carousel>
            <Card $radius="0 16px 16px 0"><CardTop /></Card>
            <Card>
              <CardTop>
                <EyeButton aria-label="売上を隠す">
                  <svg width="66" height="42" viewBox="0 0 66 42"><path d="M0 21C9 7 20 0 33 0S57 7 66 21C57 35 46 42 33 42S9 35 0 21Z" /><circle cx="33" cy="21" r="12" fill="none" stroke="#fff" strokeWidth="6" /></svg>
                </EyeButton>
                <Earnings>
                  <Pill><Yen>￥</Yen>4,453</Pill>
                  <Period>今日</Period>
                </Earnings>
              </CardTop>
              <CardBody>
                <Summary><Count>10</Count> 回の配車/配達を完了しました</Summary>
                <WeeklyLink href="#weekly">週ごとの概要を見る</WeeklyLink>
              </CardBody>
            </Card>
            <Card $radius="16px 0 0 16px"><CardTop /></Card>
          </Carousel>
          <Dots aria-label="カード">
            <Dot aria-label="前のカード" />
            <Dot aria-label="今日" $active />
            <Dot aria-label="次のカード" />
          </Dots>
          <Actions>
            <RoundButton aria-label="安全ツールキット">
              <svg width="60" height="70" viewBox="0 0 60 70"><path d="M0 7Q30-6 60 7V35C60 52 48 62 30 70C12 62 0 52 0 35Z" fill="#174499" /><path d="M12 16Q30 9 48 16V36C48 46 41 52 30 57C19 52 12 46 12 36Z" fill="none" stroke="#999" strokeWidth="6" /></svg>
            </RoundButton>
            <GoButton><GoRing>出発</GoRing></GoButton>
          </Actions>
          <Sheet>
            <button aria-label="開く"><svg width="34" height="22" viewBox="0 0 34 22"><path d="M3 19L17 5L31 19" fill="none" stroke="#000" strokeWidth="6" /></svg></button>
            <SheetTitle>オフラインです</SheetTitle>
            <button aria-label="一覧"><svg width="62" height="46" viewBox="0 0 62 46"><path d="M17 0H62V9H17ZM17 18H62V27H17ZM17 36H62V45H17Z" /><circle cx="5" cy="5" r="4" /><circle cx="5" cy="23" r="4" /><circle cx="5" cy="41" r="4" /></svg></button>
          </Sheet>
        </Layer>
      </Stage>
      <NavBar>
        <button aria-label="戻る"><svg width="50" height="50" viewBox="0 0 50 50" fill="none" stroke="#c2c2c2" strokeWidth="4" strokeLinejoin="round"><path d="M45 3V47L5 25Z" /></svg></button>
        <button aria-label="ホーム"><svg width="50" height="50" viewBox="0 0 50 50" fill="none" stroke="#c2c2c2" strokeWidth="4"><circle cx="25" cy="25" r="23" /></svg></button>
        <button aria-label="最近"><svg width="50" height="50" viewBox="0 0 50 50" fill="none" stroke="#c2c2c2" strokeWidth="4"><rect x="4" y="4" width="42" height="42" rx="2" /></svg></button>
      </NavBar>
    </Screen>
  );
}
